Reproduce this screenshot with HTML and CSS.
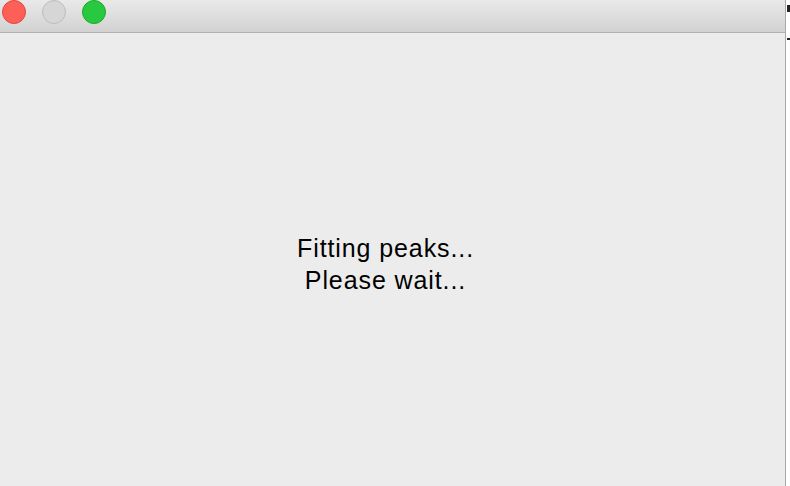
FILE: index.html
```html
<!DOCTYPE html>
<html>
<head>
<meta charset="utf-8">
<link rel="stylesheet" href="styles.css">
</head>
<body>
<div class="window">
  <div class="titlebar">
    <span class="light red"></span>
    <span class="light gray"></span>
    <span class="light green"></span>
  </div>
  <div class="content">
    <div class="message">
      <div>Fitting peaks...</div>
      <div>Please wait...</div>
    </div>
  </div>
</div>
<div class="edge">
  <span class="mark m1"></span>
  <span class="mark m2"></span>
</div>
</body>
</html>
```
FILE: styles.css
```css
html, body {
  margin: 0;
  padding: 0;
  background: #ffffff;
  width: 790px;
  height: 486px;
  overflow: hidden;
}
body {
  display: flex;
  font-family: "Liberation Sans", Arial, sans-serif;
}
.window {
  width: 785px;
  height: 486px;
  display: flex;
  flex-direction: column;
  border-right: 1px solid #a8a8a8;
  background: #ececec;
}
.titlebar {
  height: 32px;
  flex: none;
  background: linear-gradient(#e9e9e9, #d2d2d2);
  border-bottom: 1px solid #b1b1b1;
  display: flex;
  align-items: flex-start;
  gap: 16px;
  padding-left: 2px;
}
.light {
  width: 24px;
  height: 24px;
  border-radius: 50%;
  box-sizing: border-box;
}
.red { background: #fe5f57; border: 1px solid #e2463f; }
.gray { background: #d6d6d6; border: 1px solid #bdbdbd; }
.green { background: #28c840; border: 1px solid #1aab29; }
.content {
  flex: 1;
  display: flex;
  justify-content: center;
  padding-top: 199px;
  padding-right: 14px;
}
.message {
  font-size: 25px;
  line-height: 32px;
  letter-spacing: 0.9px;
  color: #000;
  text-align: center;
}
.edge {
  position: relative;
  flex: 1;
}
.mark {
  position: absolute;
  left: 1px;
  width: 3px;
  background: #222;
}
.m1 { top: 5px; height: 7px; }
.m2 { top: 38px; height: 2px; }
```
